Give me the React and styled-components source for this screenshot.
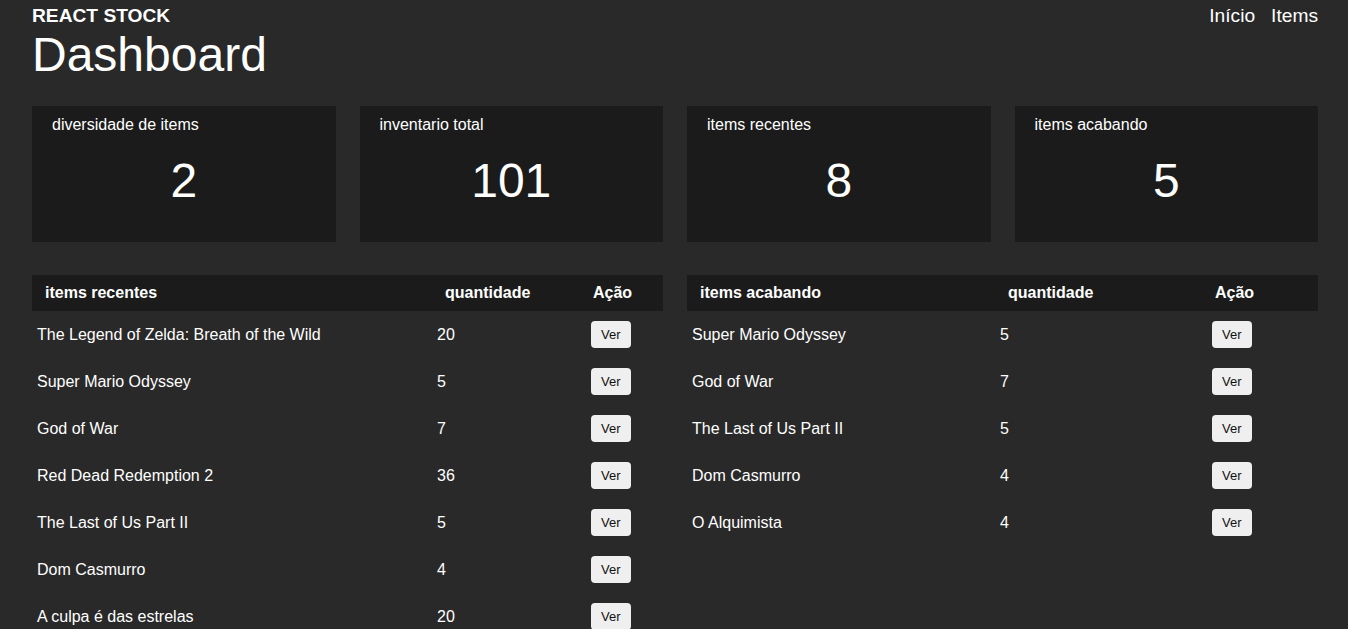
import React from 'react'
import styled, { createGlobalStyle } from 'styled-components'

/*
|--------------------------------------------------------------------------
| Data
|--------------------------------------------------------------------------
*/

const stats = [
  { label: 'diversidade de items', value: 2 },
  { label: 'inventario total', value: 101 },
  { label: 'items recentes', value: 8 },
  { label: 'items acabando', value: 5 },
]

const recentItems = [
  { name: 'The Legend of Zelda: Breath of the Wild', qty: 20 },
  { name: 'Super Mario Odyssey', qty: 5 },
  { name: 'God of War', qty: 7 },
  { name: 'Red Dead Redemption 2', qty: 36 },
  { name: 'The Last of Us Part II', qty: 5 },
  { name: 'Dom Casmurro', qty: 4 },
  { name: 'A culpa é das estrelas', qty: 20 },
]

const lowItems = [
  { name: 'Super Mario Odyssey', qty: 5 },
  { name: 'God of War', qty: 7 },
  { name: 'The Last of Us Part II', qty: 5 },
  { name: 'Dom Casmurro', qty: 4 },
  { name: 'O Alquimista', qty: 4 },
]

/*
|--------------------------------------------------------------------------
| Global
|--------------------------------------------------------------------------
*/

const GlobalStyle = createGlobalStyle`
  * { box-sizing: border-box; }
  body {
    margin: 0;
    background: #292929;
    color: #ffffff;
    font-family: "Liberation Sans", Arial, sans-serif;
  }
`

const Page = styled.div`
  padding: 5px 30px 0 32px;
`

/*
|--------------------------------------------------------------------------
| Header
|--------------------------------------------------------------------------
*/

const Header = styled.header`
  display: flex;
  justify-content: space-between;
  align-items: flex-start;
`

const Brand = styled.div`
  font-size: 19.2px;
  font-weight: bold;
  line-height: 22px;
`

const PageTitle = styled.h1`
  margin: 1px 0 0;
  font-size: 48px;
  font-weight: normal;
  line-height: 54px;
`

const Nav = styled.nav`
  display: flex;
  gap: 16px;
  font-size: 19.2px;
  line-height: 22px;
`

const NavLink = styled.a`
  color: #ffffff;
  text-decoration: none;
`

/*
|--------------------------------------------------------------------------
| Stat cards
|--------------------------------------------------------------------------
*/

const StatGrid = styled.div`
  display: grid;
  grid-template-columns: repeat(4, 1fr);
  gap: 24px;
  margin-top: 24px;
`

const StatCard = styled.div`
  height: 136px;
  background: #1b1b1b;
  padding: 10px 20px 0;
`

const StatLabel = styled.div`
  font-size: 16px;
  line-height: 18px;
`

const StatValue = styled.div`
  margin-top: 20px;
  text-align: center;
  font-size: 48px;
  line-height: 54px;
`

/*
|--------------------------------------------------------------------------
| Tables
|--------------------------------------------------------------------------
*/

const TableGrid = styled.div`
  display: grid;
  grid-template-columns: 1fr 1fr;
  gap: 24px;
  margin-top: 33px;
  align-items: start;
`

const Row = styled.div`
  display: grid;
  grid-template-columns: ${({ cols }) => cols};
  align-items: center;
  height: ${({ head }) => (head ? '36px' : '47px')};
  background: ${({ head }) => (head ? '#1b1b1b' : 'transparent')};
  font-size: 16px;
  font-weight: ${({ head }) => (head ? 'bold' : 'normal')};
`

const Cell = styled.div`
  padding-left: ${({ pad }) => pad || 5}px;
  white-space: nowrap;
`

const ViewButton = styled.button`
  border: none;
  border-radius: 4px;
  background: #efefef;
  color: #111111;
  font-family: "Liberation Sans", Arial, sans-serif;
  font-size: 13px;
  line-height: 15px;
  padding: 6px 10px;
  cursor: pointer;
`

const ItemsTable = ({ title, items, cols, headPads }) => (
  <div>
    <Row head cols={cols}>
      <Cell pad={headPads[0]}>{title}</Cell>
      <Cell pad={headPads[1]}>quantidade</Cell>
      <Cell pad={headPads[2]}>Ação</Cell>
    </Row>
    {items.map((item) => (
      <Row key={item.name} cols={cols}>
        <Cell>{item.name}</Cell>
        <Cell>{item.qty}</Cell>
        <Cell>
          <ViewButton>Ver</ViewButton>
        </Cell>
      </Row>
    ))}
  </div>
)

export default function App() {
  return (
    <>
      <GlobalStyle />
      <Page>
        <Header>
          <div>
            <Brand>REACT STOCK</Brand>
            <PageTitle>Dashboard</PageTitle>
          </div>
          <Nav>
            <NavLink href="#">Início</NavLink>
            <NavLink href="#">Items</NavLink>
          </Nav>
        </Header>

        <StatGrid>
          {stats.map((s) => (
            <StatCard key={s.label}>
              <StatLabel>{s.label}</StatLabel>
              <StatValue>{s.value}</StatValue>
            </StatCard>
          ))}
        </StatGrid>

        <TableGrid>
          <ItemsTable
            title="items recentes"
            items={recentItems}
            cols="400px 154px 1fr"
            headPads={[13, 13, 7]}
          />
          <ItemsTable
            title="items acabando"
            items={lowItems}
            cols="308px 212px 1fr"
            headPads={[13, 13, 8]}
          />
        </TableGrid>
      </Page>
    </>
  )
}
